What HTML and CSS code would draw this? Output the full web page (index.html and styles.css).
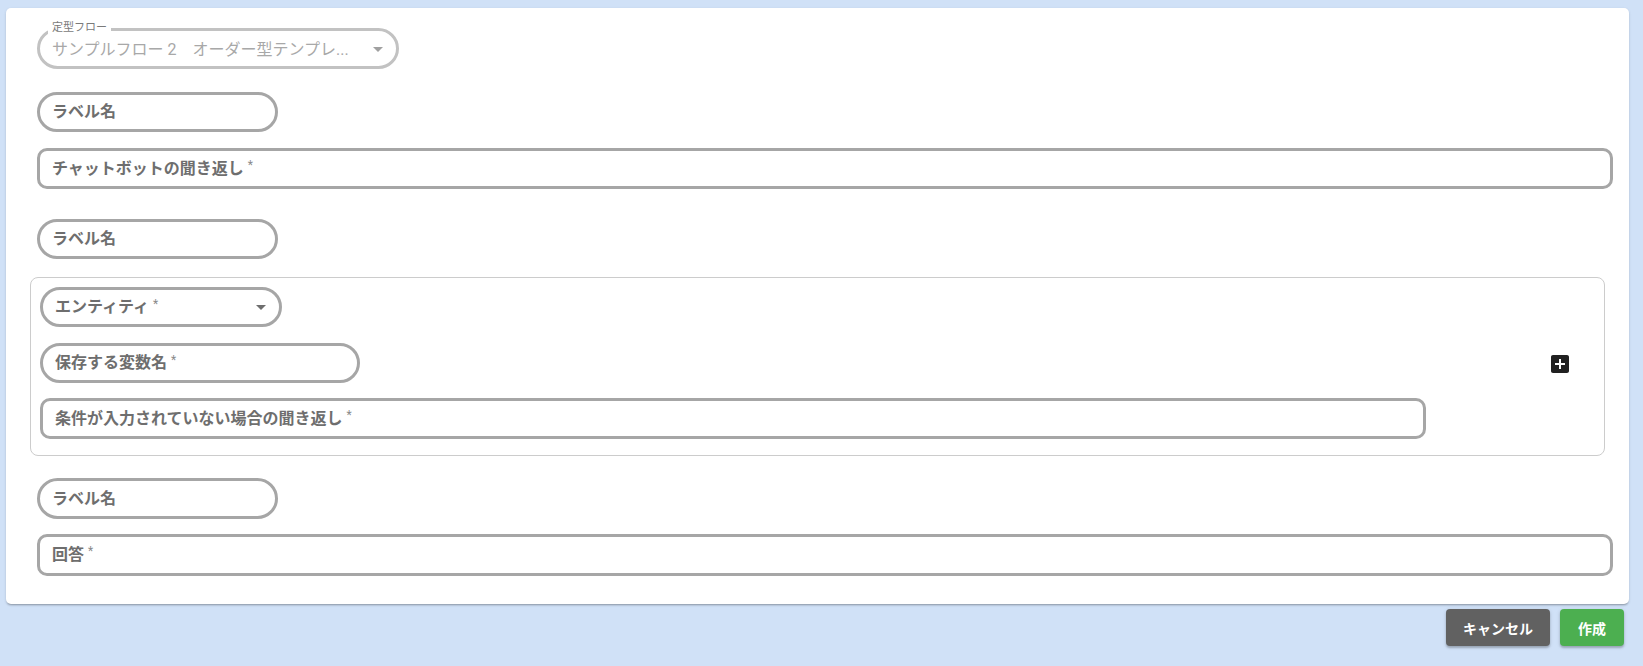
FILE: index.html
```html
<!DOCTYPE html>
<html lang="ja">
<head>
<meta charset="utf-8">
<link rel="stylesheet" href="styles.css">
</head>
<body>
<div class="card">
  <div class="field pill select disabled">
    <span class="legend">定型フロー</span>
    <span class="value">サンプルフロー 2　オーダー型テンプレ...</span>
    <span class="arrow light"></span>
  </div>

  <div class="field pill w240 mt23"><span class="label">ラベル名</span></div>
  <div class="field rect full h41 mt16"><span class="label">チャットボットの聞き返し</span><span class="req">*</span></div>

  <div class="field pill w240 mt30"><span class="label">ラベル名</span></div>

  <div class="group">
    <div class="group-fields">
      <div class="field pill w242 select"><span class="label">エンティティ</span><span class="req">*</span><span class="arrow"></span></div>
      <div class="field pill w319 mt16"><span class="label">保存する変数名</span><span class="req">*</span></div>
      <div class="field rect full h41 mt15"><span class="label">条件が入力されていない場合の聞き返し</span><span class="req">*</span></div>
    </div>
    <div class="add-icon">
      <svg viewBox="0 0 24 24" width="24" height="24"><path fill="#212121" d="M19 3H5c-1.11 0-2 .9-2 2v14c0 1.1.89 2 2 2h14c1.1 0 2-.9 2-2V5c0-1.1-.9-2-2-2zm-2 10h-4v4h-2v-4H7v-2h4V7h2v4h4v2z"/></svg>
    </div>
  </div>

  <div class="field pill w240 h41 mt22"><span class="label">ラベル名</span></div>
  <div class="field rect full h42 mt15"><span class="label">回答</span><span class="req">*</span></div>
</div>
<div class="actions">
  <button class="btn cancel">キャンセル</button>
  <button class="btn create">作成</button>
</div>
</body>
</html>
```
FILE: styles.css
```css
* { box-sizing: border-box; }
html, body { margin: 0; padding: 0; }
body {
  background: #d0e1f7;
  font-family: Roboto, "Noto Sans CJK JP", sans-serif;
  width: 1643px;
  height: 666px;
  overflow: hidden;
}
.card {
  margin: 8px 0 0 6px;
  width: 1623px;
  height: 596px;
  background: #fff;
  border-radius: 5px;
  box-shadow: 0 2px 2px -1px rgba(0,0,0,.25), 0 1px 3px rgba(0,0,0,.12);
  padding: 20px 16px 28px 31px;
}
.field {
  position: relative;
  display: flex;
  align-items: center;
  height: 40px;
  border: 3px solid #a6a6a6;
  padding: 0 12px;
  background: #fff;
}
.pill { border-radius: 21px; }
.rect { border-radius: 10px; }
.full { width: 100%; }
.w240 { width: 241px; }
.w242 { width: 242px; }
.w319 { width: 320px; }
.h41 { height: 41px; }
.h42 { height: 42px; }
.mt15 { margin-top: 15px; }
.mt16 { margin-top: 16px; }
.mt22 { margin-top: 22px; }
.mt23 { margin-top: 23px; }
.mt30 { margin-top: 30px; }

.label {
  font-size: 16px;
  font-weight: 700;
  color: #6e6e6e;
  line-height: 20px;
}
.req {
  font-size: 12px;
  color: #8a8a8a;
  margin-left: 4px;
  align-self: flex-start;
  margin-top: 8px;
  line-height: 12px;
}

.select.disabled {
  width: 362px;
  height: 41px;
  border-color: #c2c2c2;
}
.legend {
  position: absolute;
  left: 8px;
  top: -10px;
  padding: 0 4px;
  background: #fff;
  font-size: 11px;
  line-height: 14px;
  color: #7a7a7a;
}
.value {
  font-size: 16px;
  color: #a8a8a8;
  white-space: nowrap;
  line-height: 20px;
  margin-top: 2px;
}
.arrow {
  position: absolute;
  right: 13px;
  top: 15px;
  width: 0;
  height: 0;
  border-left: 5px solid transparent;
  border-right: 5px solid transparent;
  border-top: 5px solid #6e6e6e;
}
.arrow.light {
  right: 13px;
  top: 16px;
  border-top-color: #a0a0a0;
}

.group {
  margin-top: 18px;
  margin-left: -7px;
  width: 1575px;
  border: 1px solid #cccccc;
  border-radius: 8px;
  padding: 9px 32px 16px 9px;
  display: flex;
  align-items: center;
}
.group-fields {
  width: 1387px;
  margin-right: 122px;
}
.add-icon {
  width: 24px;
  height: 24px;
  margin-top: 1px;
}
.add-icon svg { display: block; }

.actions {
  display: flex;
  justify-content: flex-end;
  gap: 10px;
  padding-right: 19px;
  margin-top: 5px;
}
.btn {
  height: 37px;
  border: none;
  border-radius: 4px;
  color: #fff;
  font-family: Roboto, "Noto Sans CJK JP", sans-serif;
  font-size: 14px;
  font-weight: 700;
  box-shadow: 0 2px 2px rgba(0,0,0,.2), 0 1px 4px rgba(0,0,0,.12);
  padding: 0;
}
.cancel { width: 104px; background: #616161; }
.create { width: 64px; background: #4caf50; }
```
